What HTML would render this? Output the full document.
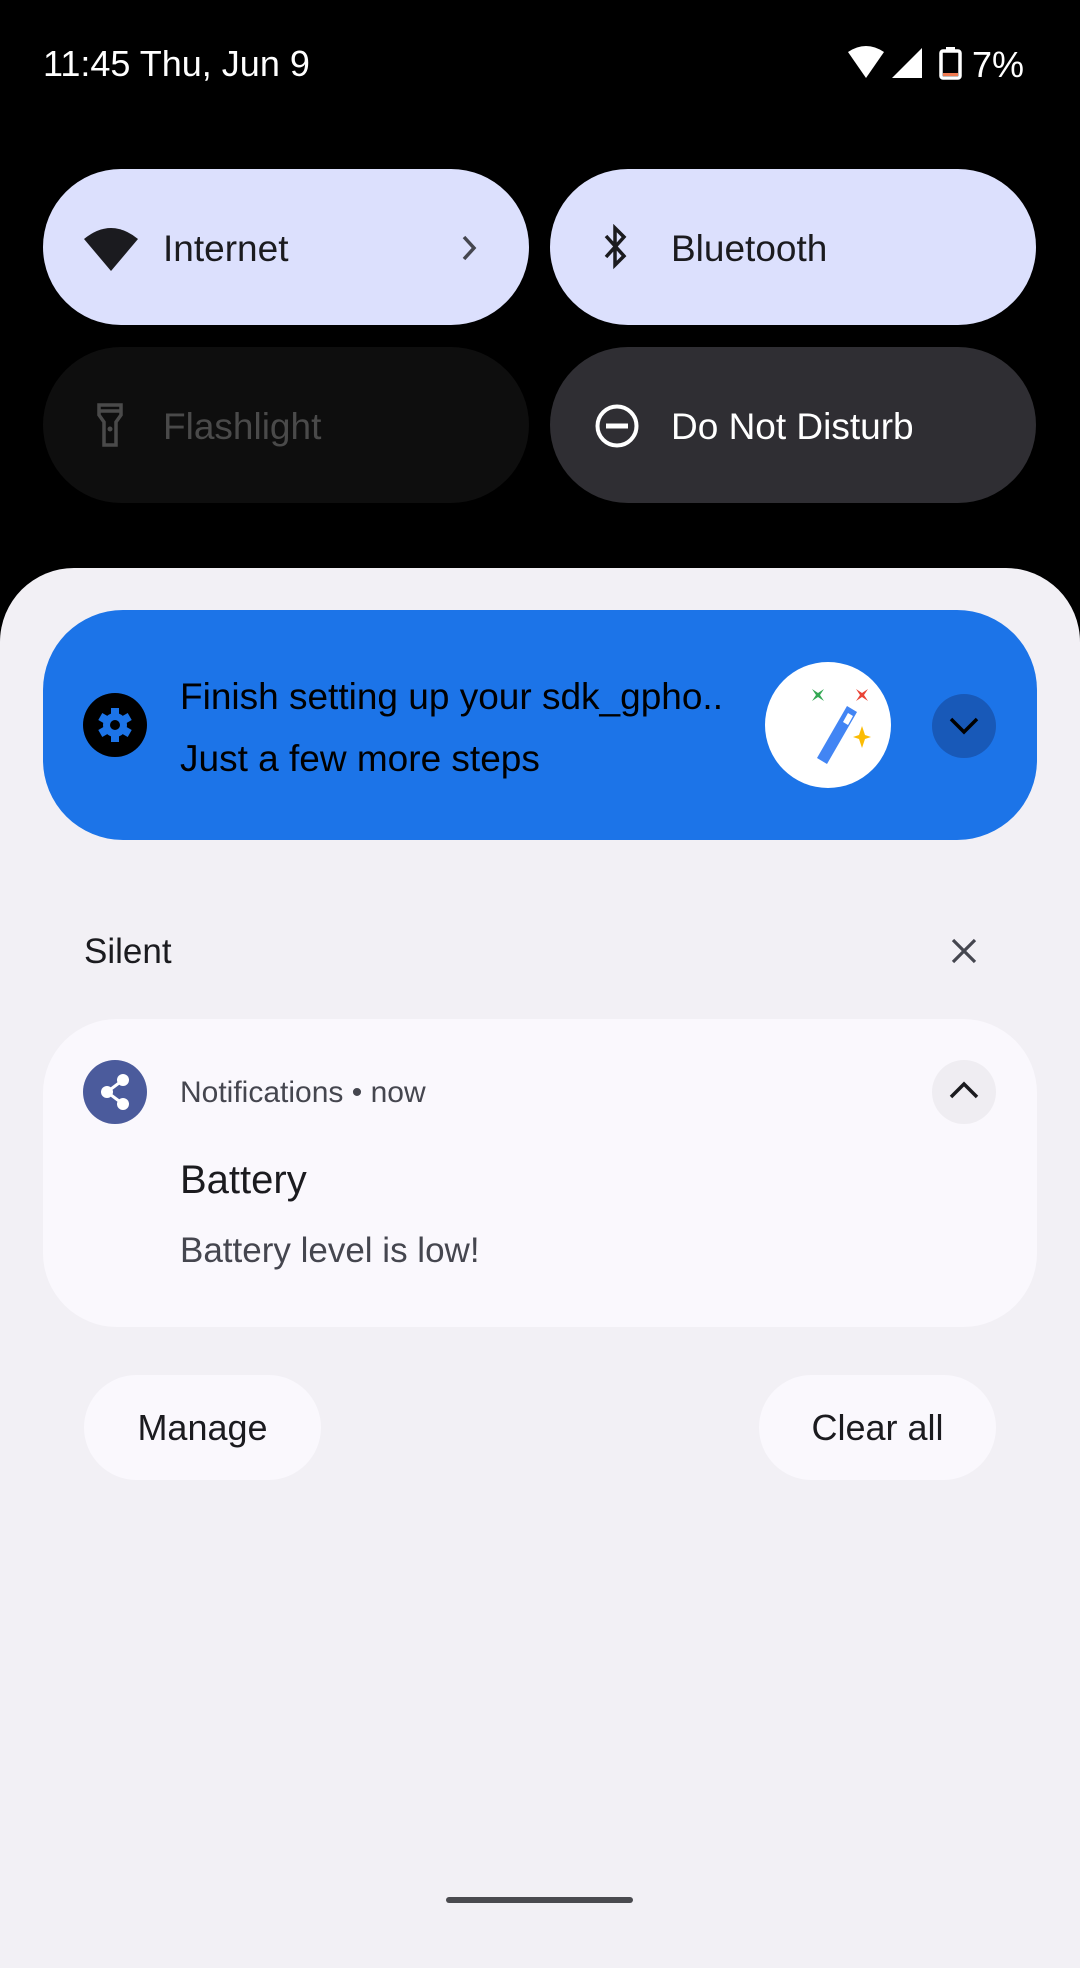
<!DOCTYPE html>
<html><head><meta charset="utf-8"><style>
*{margin:0;padding:0;box-sizing:border-box}
body{width:1080px;height:1920px;background:#000;font-family:"Liberation Sans",sans-serif;position:relative;overflow:hidden}
.abs{position:absolute}
.tile{position:absolute;height:156px;width:486px;border-radius:78px}
.t{position:absolute;white-space:nowrap;line-height:1}
</style></head><body>
<div class="t" style="left:43px;top:46px;font-size:36px;color:#fff">11:45 Thu, Jun 9</div>
<svg class="abs" style="left:846px;top:46px" width="180" height="34" viewBox="0 0 180 34">
<path d="M2 6 Q20 -6 38 6 L20 32 Z" fill="#fff"/>
<path d="M76 2 L76 32 L46 32 Z" fill="#fff"/>
<rect x="95" y="5" width="19" height="27" rx="2" fill="none" stroke="#fff" stroke-width="3.5"/>
<rect x="100" y="1" width="9" height="5" fill="#fff"/>
<rect x="97" y="27" width="15" height="3" fill="#f07a50"/>
<text x="126" y="31" font-size="36" fill="#fff" font-family="Liberation Sans">7%</text>
</svg>

<div class="tile" style="left:43px;top:169px;background:#dce0fd"></div>
<svg class="abs" style="left:84px;top:225px" width="54" height="46" viewBox="0 0 54 46"><path d="M0 14 Q27 -8 54 14 L27 46 Z" fill="#1b1b1f"/></svg>
<div class="t" style="left:163px;top:230px;font-size:37px;color:#1b1b1f">Internet</div>
<svg class="abs" style="left:460px;top:234px" width="20" height="28" viewBox="0 0 20 28"><path d="M4 3 L14 14 L4 25" stroke="#45464f" stroke-width="3.5" fill="none"/></svg>

<div class="tile" style="left:550px;top:169px;background:#dce0fd"></div>
<svg class="abs" style="left:600px;top:224px" width="32" height="46" viewBox="0 0 32 46"><path d="M6 12 L24 32 L15 41 L15 4 L24 13 L6 33" stroke="#1b1b1f" stroke-width="3.5" fill="none"/></svg>
<div class="t" style="left:671px;top:230px;font-size:37px;color:#1b1b1f">Bluetooth</div>

<div class="tile" style="left:43px;top:347px;background:#0e0e0e"></div>
<svg class="abs" style="left:96px;top:402px" width="28" height="46" viewBox="0 0 28 46"><path d="M3 3 H25 V13 L20 20 V43 H8 V20 L3 13 Z M3 9 H25" stroke="#4a4a4a" stroke-width="3.5" fill="none"/><circle cx="14" cy="27" r="2.5" fill="#4a4a4a"/></svg>
<div class="t" style="left:163px;top:408px;font-size:37px;color:#4a4a4a">Flashlight</div>

<div class="tile" style="left:550px;top:347px;background:#2f2e33"></div>
<svg class="abs" style="left:594px;top:403px" width="46" height="46" viewBox="0 0 46 46"><circle cx="23" cy="23" r="19.5" stroke="#fff" stroke-width="4" fill="none"/><rect x="12" y="20.5" width="22" height="5" fill="#fff"/></svg>
<div class="t" style="left:671px;top:408px;font-size:37px;color:#fff">Do Not Disturb</div>

<div class="abs" style="left:0;top:568px;width:1080px;height:1400px;background:#f2f0f5;border-radius:74px 74px 0 0"></div>

<div class="abs" style="left:43px;top:610px;width:994px;height:230px;background:#1c74e8;border-radius:80px"></div>
<svg class="abs" style="left:83px;top:693px" width="64" height="64" viewBox="0 0 64 64"><circle cx="32" cy="32" r="32" fill="#000"/>
<g fill="#1c74e8" transform="translate(32 32)"><circle r="12"/><rect x="-4" y="-17" width="8" height="34"/><rect x="-4" y="-17" width="8" height="34" transform="rotate(60)"/><rect x="-4" y="-17" width="8" height="34" transform="rotate(120)"/></g><circle cx="32" cy="32" r="5" fill="#000"/></svg>
<div class="t" style="left:180px;top:678px;font-size:37px;color:#000">Finish setting up your sdk_gpho..</div>
<div class="t" style="left:180px;top:740px;font-size:37px;color:#000">Just a few more steps</div>
<svg class="abs" style="left:765px;top:662px" width="126" height="126" viewBox="0 0 126 126"><circle cx="63" cy="63" r="63" fill="#fff"/>
<path d="M47 27 l4 6 l-4 6 l6 -4 l6 4 l-4 -6 l4 -6 l-6 4z" fill="#34a853"/>
<path d="M91 27 l4 6 l-4 6 l6 -4 l6 4 l-4 -6 l4 -6 l-6 4z" fill="#ea4335"/>
<path d="M97 64 l3 9 l6 2 l-6 2 l-3 9 l-3 -9 l-6 -2 l6 -2z" fill="#fbbc04"/>
<path d="M82 44 L92 50 L62 102 L52 96 Z" fill="#4285f4"/><path d="M83 51 L88 54 L83 63 L78 60Z" fill="#fff"/></svg>
<div class="abs" style="left:932px;top:694px;width:64px;height:64px;border-radius:32px;background:#1859b8"></div>
<svg class="abs" style="left:946px;top:710px" width="36" height="32" viewBox="0 0 36 32"><path d="M5 9 L18 22 L31 9" stroke="#000" stroke-width="3.5" fill="none"/></svg>

<div class="t" style="left:84px;top:934px;font-size:35px;color:#1b1b1f">Silent</div>
<svg class="abs" style="left:950px;top:937px" width="28" height="28" viewBox="0 0 28 28"><path d="M3 3 L25 25 M25 3 L3 25" stroke="#45464f" stroke-width="3.2"/></svg>

<div class="abs" style="left:43px;top:1019px;width:994px;height:308px;background:#faf8fd;border-radius:74px"></div>
<svg class="abs" style="left:83px;top:1060px" width="64" height="64" viewBox="0 0 64 64"><circle cx="32" cy="32" r="32" fill="#4b5b9c"/><path d="M40 20 L24 32 L40 44" stroke="#fff" stroke-width="3" fill="none"/><circle cx="40" cy="20" r="6" fill="#fff"/><circle cx="24" cy="32" r="6" fill="#fff"/><circle cx="40" cy="44" r="6" fill="#fff"/></svg>
<div class="t" style="left:180px;top:1078px;font-size:30px;color:#45464f">Notifications • now</div>
<div class="abs" style="left:932px;top:1060px;width:64px;height:64px;border-radius:32px;background:#efedf2"></div>
<svg class="abs" style="left:946px;top:1075px" width="36" height="32" viewBox="0 0 36 32"><path d="M5 22 L18 9 L31 22" stroke="#1b1b1f" stroke-width="3.5" fill="none"/></svg>
<div class="t" style="left:180px;top:1160px;font-size:40px;color:#1b1b1f">Battery</div>
<div class="t" style="left:180px;top:1233px;font-size:35px;color:#45464f">Battery level is low!</div>

<div class="abs" style="left:84px;top:1375px;width:237px;height:105px;border-radius:53px;background:#faf8fd"></div>
<div class="t" style="left:84px;top:1410px;width:237px;text-align:center;font-size:36px;color:#1b1b1f">Manage</div>
<div class="abs" style="left:759px;top:1375px;width:237px;height:105px;border-radius:53px;background:#faf8fd"></div>
<div class="t" style="left:759px;top:1410px;width:237px;text-align:center;font-size:36px;color:#1b1b1f">Clear all</div>

<div class="abs" style="left:446px;top:1897px;width:187px;height:6px;border-radius:3px;background:#4a4a4f"></div>
</body></html>
